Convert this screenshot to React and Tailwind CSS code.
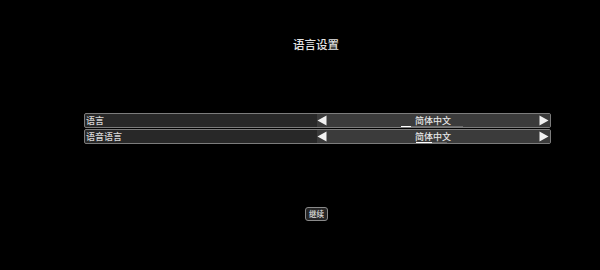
import React from "react";

const font = { fontFamily: '"Noto Sans CJK SC", "Noto Sans", sans-serif' };

const ArrowLeft = () => (
  <svg width="10" height="11" viewBox="0 0 10 11" className="shrink-0">
    <polygon points="9.5,0.5 9.5,10.5 0.5,5.5" fill="#f2f2f2" />
  </svg>
);

const ArrowRight = () => (
  <svg width="10" height="11" viewBox="0 0 10 11" className="shrink-0">
    <polygon points="0.5,0.5 0.5,10.5 9.5,5.5" fill="#f2f2f2" />
  </svg>
);

const Row = ({ label, caret }) => (
  <div className="flex h-[15px] w-[467px] rounded-[2px] border border-[#7c7c7c] bg-[#282828]">
    <div className="flex w-[232px] items-center pl-[1px] text-[9px] font-medium leading-none text-[#d8d8d8]">
      {label}
    </div>
    <div className="flex flex-1 items-center bg-[#3b3b3b] pr-[1px]">
      <ArrowLeft />
      <div className="relative flex flex-1 items-center justify-center text-[9px] font-medium leading-none text-[#e6e6e6]">
        <span>简体中文</span>
        {caret === "before" ? (
          <>
            <div className="absolute left-[74px] top-[10px] h-[1px] w-[10px] bg-white" />
            <div className="absolute left-[84px] top-[10px] h-[1px] w-[52px] bg-[#6a6a6a]" />
          </>
        ) : (
          <>
            <div className="absolute left-[89px] top-[10px] h-[1px] w-[16px] bg-white" />
            <div className="absolute left-[105px] top-[10px] h-[1px] w-[15px] bg-[#6a6a6a]" />
          </>
        )}
      </div>
      <ArrowRight />
    </div>
  </div>
);

export default function App() {
  return (
    <div className="flex h-[270px] w-[600px] flex-col bg-black" style={font}>
      <div className="pt-[37px] pl-[293px] text-[11.5px] font-medium leading-[14px] text-[#e4e4e4]">
        语言设置
      </div>
      <div className="mt-[62px] flex flex-col gap-[1px] pl-[84px]">
        <Row label="语言" caret="before" />
        <Row label="语音语言" caret="under" />
      </div>
      <div className="mt-[63px] pl-[305px]">
        <div className="flex h-[14px] w-[23px] items-center justify-center rounded-[3px] border border-[#8a8a8a] bg-[#262626] text-[7.5px] font-medium leading-none text-[#e0e0e0]">
          继续
        </div>
      </div>
    </div>
  );
}
